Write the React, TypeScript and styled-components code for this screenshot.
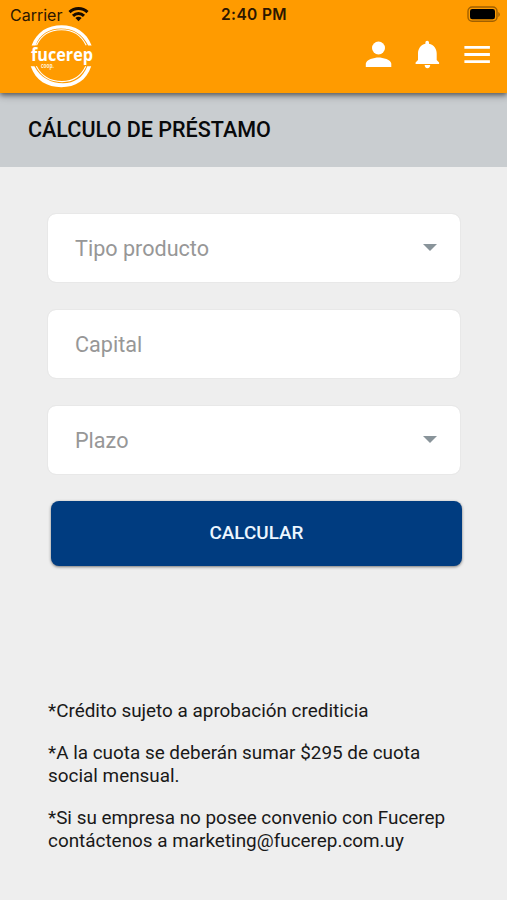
import React from "react";
import styled, { createGlobalStyle } from "styled-components";

const GlobalStyle = createGlobalStyle`
  * { box-sizing: border-box; }
  body {
    margin: 0;
    background: #eeeeee;
    font-family: Roboto, "Liberation Sans", sans-serif;
  }
`;

const Screen = styled.div`
  width: 100%;
  height: 900px;
  display: flex;
  flex-direction: column;
  overflow: hidden;
  background: #eeeeee;
`;

const Header = styled.header`
  position: relative;
  flex: none;
  height: 93px;
  background: #ff9b00;
  box-shadow: 0 2px 5px rgba(0, 0, 0, 0.5), 0 4px 8px rgba(0, 0, 0, 0.14);
`;

const StatusBar = styled.div`
  display: grid;
  grid-template-columns: 1fr auto 1fr;
  height: 25px;
  padding: 3px 7px 0 10px;
  color: #2c1600;
  font-family: Inter, "Liberation Sans", sans-serif;
  font-size: 16px;
  line-height: 24px;
`;

const Carrier = styled.div`
  display: flex;
  gap: 6px;

  svg { margin-top: 3px; }
`;

const Clock = styled.div`
  margin-right: 2px;
  font-weight: 600;
  font-size: 15.5px;
  letter-spacing: 0.35px;
`;

const BatterySlot = styled.div`
  display: flex;
  justify-content: flex-end;
  padding-top: 3px;
`;

const Toolbar = styled.div`
  display: flex;
  justify-content: space-between;
  padding: 0 14px 0 26px;
`;

const Actions = styled.div`
  display: flex;
  gap: 17px;
  padding-top: 13px;
`;

const IconButton = styled.button`
  display: block;
  width: 32px;
  height: 32px;
  padding: 0;
  border: 0;
  background: none;

  svg { display: block; }
`;

const TitleBar = styled.div`
  flex: none;
  display: flex;
  align-items: center;
  height: 73.5px;
  padding: 0 28px;
  background: #c9cdd0;
`;

const Title = styled.h1`
  margin: 0;
  color: #08090b;
  font-size: 21.55px;
  font-weight: 500;
  line-height: 26px;
  white-space: nowrap;
`;

const Form = styled.main`
  display: flex;
  flex-direction: column;
  gap: 26px;
  padding: 46.5px 46px 0 47px;
`;

const Field = styled.div`
  display: flex;
  align-items: center;
  justify-content: space-between;
  height: 70px;
  padding: 1px 23px 0 27px;
  border: 1px solid #e8e8e8;
  border-radius: 9px;
  background: #ffffff;
  background-clip: padding-box;
  color: #979797;
  font-size: 21.6px;
  line-height: 28px;
`;

const Caret = styled.svg`
  width: 14px;
  height: 7px;
  margin-bottom: 2px;
`;

const SubmitButton = styled.button`
  height: 65px;
  margin: 0 -1px 0 4px;
  padding: 0 0 2px;
  border: 0;
  border-radius: 8px;
  background: #003c80;
  box-shadow: 0 1px 3px rgba(0, 0, 0, 0.5);
  color: #ecf6ff;
  font: 500 18.9px/24px Roboto, "Liberation Sans", sans-serif;
`;

const Notes = styled.section`
  display: flex;
  flex-direction: column;
  gap: 19px;
  padding: 133px 48px 0;
`;

const Note = styled.p`
  margin: 0;
  color: #191919;
  font-size: 18.9px;
  line-height: 23px;
  white-space: nowrap;
`;

const WifiIcon = () => (
  <svg width="21" height="17" viewBox="0 0 21 17" fill="none" stroke="#160b00" strokeWidth="3">
    <path d="M1.5 6.2C6.6 1.3 14.4 1.3 19.5 6.2" />
    <path d="M5 9.8C8.2 6.8 12.8 6.8 16 9.8" />
    <path d="M10.5 15.2L7.4 12.1Q10.5 9.6 13.6 12.1Z" fill="#160b00" stroke="none" />
  </svg>
);

const BatteryIcon = () => (
  <svg width="33" height="17" viewBox="0 0 33 17">
    <rect x="1" y="1" width="29" height="14.3" rx="4.2" fill="none" stroke="#a06000" strokeWidth="1.4" />
    <rect x="3" y="3" width="25" height="10.3" rx="2.3" fill="#000" />
    <path d="M31.3 6v5q1.5-.7 1.5-2.5T31.3 6Z" fill="#a06000" />
  </svg>
);

const Logo = () => (
  <svg width="72" height="66" viewBox="26 25 72 66" fill="none" stroke="#fff">
    <path d="M31.6 45.5C37 31.5 48 25.3 61.5 25.3S86.5 32 91.6 45.5H88.2C82.5 33.8 73 28.4 61 28.4S39.7 34 35.6 45.5Z" fill="#fff" stroke="none" />
    <path d="M36.5 45.3C41.5 34.2 50 29.7 61.5 29.7S81 34.3 86.2 45.3" strokeWidth="1.1" />
    <path d="M30.7 66.3C35.7 80.8 47.2 87.2 61.3 87.2S86.5 80.7 91.2 66.3H87.3C82.8 77.8 74.5 83.2 63 83.2S40.3 78 34.4 66.3Z" fill="#fff" stroke="none" />
    <path d="M36.3 66.3C42 77.2 51 81.6 62 81.6S80.8 77 85.8 66.3" strokeWidth="1.1" />
    <text fill="#fff" stroke="none" fontFamily="'Open Sans', sans-serif" fontWeight="700">
      <tspan x="31" y="61" fontSize="18" textLength="62" lengthAdjust="spacingAndGlyphs">fucerep</tspan>
      <tspan x="41" y="67.7" fontSize="6.5" textLength="13" lengthAdjust="spacingAndGlyphs" fill="#fff0d8">coop.</tspan>
    </text>
  </svg>
);

const PersonIcon = () => (
  <svg width="32" height="32" viewBox="0 0 32 32" fill="#fff">
    <circle cx="15.5" cy="10" r="6.5" />
    <path d="M2.8 29v-3.2c0-4.3 8.5-6.4 12.7-6.4s12.8 2.1 12.8 6.4V29Z" />
  </svg>
);

const BellIcon = () => (
  <svg width="32" height="32" viewBox="0 0 32 32" fill="#fff">
    <path d="M15.2 2.7c1.1 0 1.8.8 1.8 2v1c4.9 1.1 7.7 5 7.7 9.8v6.6l2.4 2.3v1.5H3.6v-1.5L6 22.1v-6.6c0-4.8 2.7-8.7 7.4-9.8v-1c0-1.2.7-2 1.8-2Z" />
    <path d="M12.7 27h5.5c0 1.9-1 3.3-2.8 3.3S12.7 28.9 12.7 27Z" />
  </svg>
);

const MenuIcon = () => (
  <svg width="32" height="32" viewBox="0 0 32 32" fill="#fff">
    <path d="M3.4 8h25.5v2.7H3.4zM3.4 15.1h25.5v2.8H3.4zM3.4 22.3h25.5V25H3.4z" />
  </svg>
);

const SelectCaret = () => (
  <Caret viewBox="0 0 14 7">
    <path d="M0 0H14L7 7Z" fill="#89949a" />
  </Caret>
);

const fields = [
  { label: "Tipo producto", select: true },
  { label: "Capital", select: false },
  { label: "Plazo", select: true },
];

export default function App() {
  return (
    <Screen>
      <GlobalStyle />
      <Header>
        <StatusBar>
          <Carrier>
            Carrier
            <WifiIcon />
          </Carrier>
          <Clock>2:40 PM</Clock>
          <BatterySlot>
            <BatteryIcon />
          </BatterySlot>
        </StatusBar>
        <Toolbar>
          <Logo />
          <Actions>
            <IconButton aria-label="Perfil"><PersonIcon /></IconButton>
            <IconButton aria-label="Notificaciones"><BellIcon /></IconButton>
            <IconButton aria-label="Menú"><MenuIcon /></IconButton>
          </Actions>
        </Toolbar>
      </Header>
      <TitleBar>
        <Title>CÁLCULO DE PRÉSTAMO</Title>
      </TitleBar>
      <Form>
        {fields.map(({ label, select }) => (
          <Field key={label}>
            {label}
            {select && <SelectCaret />}
          </Field>
        ))}
        <SubmitButton>CALCULAR</SubmitButton>
      </Form>
      <Notes>
        <Note>*Crédito sujeto a aprobación crediticia</Note>
        <Note>
          *A la cuota se deberán sumar $295 de cuota
          <br />
          social mensual.
        </Note>
        <Note>
          *Si su empresa no posee convenio con Fucerep
          <br />
          contáctenos a marketing@fucerep.com.uy
        </Note>
      </Notes>
    </Screen>
  );
}
